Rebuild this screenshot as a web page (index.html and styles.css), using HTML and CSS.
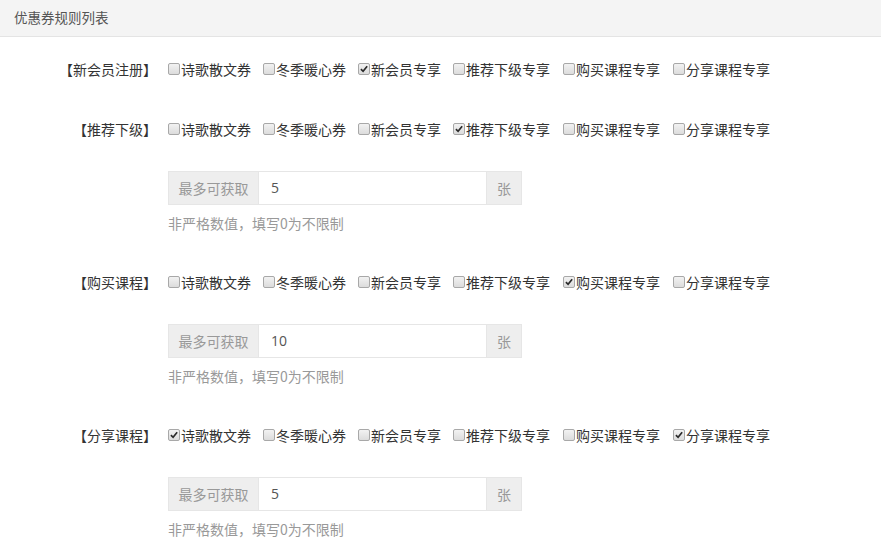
FILE: index.html
```html
<!DOCTYPE html>
<html lang="zh-CN">
<head>
<meta charset="utf-8">
<title>优惠券规则列表</title>
<link rel="stylesheet" href="styles.css">
</head>
<body>
<div class="panel">
  <div class="panel-head">优惠券规则列表</div>
  <div class="panel-body">

    <div class="group">
      <div class="label">【新会员注册】</div>
      <div class="field">
        <div class="checks">
          <label class="check"><span class="box"></span>诗歌散文券</label>
          <label class="check"><span class="box"></span>冬季暖心券</label>
          <label class="check"><span class="box on"><svg viewBox="0 0 12 12"><path d="M2.3 6.2 L4.9 8.8 L9.8 2.6" /></svg></span>新会员专享</label>
          <label class="check"><span class="box"></span>推荐下级专享</label>
          <label class="check"><span class="box"></span>购买课程专享</label>
          <label class="check"><span class="box"></span>分享课程专享</label>
        </div>
      </div>
    </div>

    <div class="group has-input">
      <div class="label">【推荐下级】</div>
      <div class="field">
        <div class="checks">
          <label class="check"><span class="box"></span>诗歌散文券</label>
          <label class="check"><span class="box"></span>冬季暖心券</label>
          <label class="check"><span class="box"></span>新会员专享</label>
          <label class="check"><span class="box on"><svg viewBox="0 0 12 12"><path d="M2.3 6.2 L4.9 8.8 L9.8 2.6" /></svg></span>推荐下级专享</label>
          <label class="check"><span class="box"></span>购买课程专享</label>
          <label class="check"><span class="box"></span>分享课程专享</label>
        </div>
        <div class="input-group">
          <span class="addon addon-left">最多可获取</span>
          <span class="input">5</span>
          <span class="addon addon-right">张</span>
        </div>
        <div class="help">非严格数值，填写0为不限制</div>
      </div>
    </div>

    <div class="group has-input">
      <div class="label">【购买课程】</div>
      <div class="field">
        <div class="checks">
          <label class="check"><span class="box"></span>诗歌散文券</label>
          <label class="check"><span class="box"></span>冬季暖心券</label>
          <label class="check"><span class="box"></span>新会员专享</label>
          <label class="check"><span class="box"></span>推荐下级专享</label>
          <label class="check"><span class="box on"><svg viewBox="0 0 12 12"><path d="M2.3 6.2 L4.9 8.8 L9.8 2.6" /></svg></span>购买课程专享</label>
          <label class="check"><span class="box"></span>分享课程专享</label>
        </div>
        <div class="input-group">
          <span class="addon addon-left">最多可获取</span>
          <span class="input">10</span>
          <span class="addon addon-right">张</span>
        </div>
        <div class="help">非严格数值，填写0为不限制</div>
      </div>
    </div>

    <div class="group has-input">
      <div class="label">【分享课程】</div>
      <div class="field">
        <div class="checks">
          <label class="check"><span class="box on"><svg viewBox="0 0 12 12"><path d="M2.3 6.2 L4.9 8.8 L9.8 2.6" /></svg></span>诗歌散文券</label>
          <label class="check"><span class="box"></span>冬季暖心券</label>
          <label class="check"><span class="box"></span>新会员专享</label>
          <label class="check"><span class="box"></span>推荐下级专享</label>
          <label class="check"><span class="box"></span>购买课程专享</label>
          <label class="check"><span class="box on"><svg viewBox="0 0 12 12"><path d="M2.3 6.2 L4.9 8.8 L9.8 2.6" /></svg></span>分享课程专享</label>
        </div>
        <div class="input-group">
          <span class="addon addon-left">最多可获取</span>
          <span class="input">5</span>
          <span class="addon addon-right">张</span>
        </div>
        <div class="help">非严格数值，填写0为不限制</div>
      </div>
    </div>

  </div>
</div>
</body>
</html>
```

FILE: styles.css
```css
* { box-sizing: border-box; }
html, body {
  margin: 0;
  padding: 0;
  background: #fff;
}
body {
  font-family: "Microsoft YaHei", "Noto Sans CJK SC", "Liberation Sans", sans-serif;
  font-size: 14px;
  color: #333;
  overflow: hidden;
}
.panel-head {
  height: 37px;
  line-height: 34px;
  padding-left: 14px;
  background: #f4f4f4;
  border-bottom: 1px solid #e4e4e4;
  color: #555;
  font-size: 13.5px;
}
.panel-body {
  padding-top: 22px;
}
.group {
  display: grid;
  grid-template-columns: 157px 1fr;
  column-gap: 11px;
  margin-bottom: 40px;
}
.group.has-input {
  margin-bottom: 39px;
}
.label {
  text-align: right;
  line-height: 20px;
  height: 20px;
  color: #333;
  white-space: nowrap;
}
.checks {
  display: flex;
  align-items: center;
  height: 20px;
}
.check {
  display: flex;
  align-items: center;
  line-height: 20px;
  white-space: nowrap;
  color: #333;
  flex: none;
}
.check:nth-child(-n+3) {
  width: 95px;
}
.check:nth-child(n+4) {
  width: 110px;
}
.box {
  width: 12px;
  height: 12px;
  margin-right: 1px;
  border: 1px solid #a8a8a8;
  border-radius: 2px;
  background: linear-gradient(#f2f2f2, #dcdcdc);
  display: flex;
  align-items: center;
  justify-content: center;
  flex: none;
}
.box svg {
  width: 10px;
  height: 10px;
}
.box svg path {
  fill: none;
  stroke: #2a2a2a;
  stroke-width: 2;
}
.input-group {
  display: flex;
  width: 354px;
  height: 34px;
  margin-top: 32px;
  border: 1px solid #e6e6e6;
}
.addon {
  background: #eeeeee;
  color: #999;
  line-height: 32px;
  text-align: center;
  flex: none;
}
.addon-left {
  width: 90px;
  border-right: 1px solid #e6e6e6;
}
.addon-right {
  width: 35px;
  border-left: 1px solid #e6e6e6;
}
.input {
  flex: 1;
  line-height: 32px;
  padding-left: 12px;
  color: #555;
  font-family: "Open Sans", "Liberation Sans", "Noto Sans CJK SC", sans-serif;
}
.help {
  margin-top: 8px;
  line-height: 20px;
  color: #999;
}
```
